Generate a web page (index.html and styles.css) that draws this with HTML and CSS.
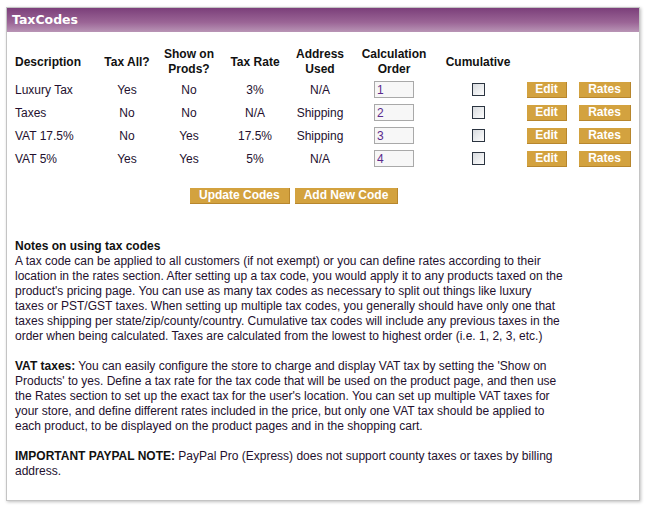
FILE: index.html
```html
<!DOCTYPE html>
<html lang="en">
<head>
  <meta charset="UTF-8" />
  <title>TaxCodes</title>
  <link rel="stylesheet" href="styles.css">
</head>
<body>

  <div class="panel">
    <div class="panel-head">TaxCodes</div>

    <div class="panel-body">
      <table class="codes">
        <thead>
          <tr>
            <th class="col-desc">Description</th>
            <th class="col-all">Tax All?</th>
            <th class="col-show">Show on<br>Prods?</th>
            <th class="col-rate">Tax Rate</th>
            <th class="col-addr">Address<br>Used</th>
            <th class="col-order">Calculation<br>Order</th>
            <th class="col-cum">Cumulative</th>
            <th class="col-edit"></th>
            <th class="col-rates"></th>
          </tr>
        </thead>
        <tbody>
          <tr>
            <td class="col-desc">Luxury Tax</td>
            <td>Yes</td>
            <td>No</td>
            <td>3%</td>
            <td>N/A</td>
            <td><input type="text" class="order" value="1"></td>
            <td><input type="checkbox" class="cum"></td>
            <td><button class="btn btn-edit">Edit</button></td>
            <td><button class="btn btn-rates">Rates</button></td>
          </tr>
          <tr>
            <td class="col-desc">Taxes</td>
            <td>No</td>
            <td>No</td>
            <td>N/A</td>
            <td>Shipping</td>
            <td><input type="text" class="order" value="2"></td>
            <td><input type="checkbox" class="cum"></td>
            <td><button class="btn btn-edit">Edit</button></td>
            <td><button class="btn btn-rates">Rates</button></td>
          </tr>
          <tr>
            <td class="col-desc">VAT 17.5%</td>
            <td>No</td>
            <td>Yes</td>
            <td>17.5%</td>
            <td>Shipping</td>
            <td><input type="text" class="order" value="3"></td>
            <td><input type="checkbox" class="cum"></td>
            <td><button class="btn btn-edit">Edit</button></td>
            <td><button class="btn btn-rates">Rates</button></td>
          </tr>
          <tr>
            <td class="col-desc">VAT 5%</td>
            <td>Yes</td>
            <td>Yes</td>
            <td>5%</td>
            <td>N/A</td>
            <td><input type="text" class="order" value="4"></td>
            <td><input type="checkbox" class="cum"></td>
            <td><button class="btn btn-edit">Edit</button></td>
            <td><button class="btn btn-rates">Rates</button></td>
          </tr>
        </tbody>
      </table>

      <div class="actions">
        <button class="btn btn-wide">Update Codes</button>
        <button class="btn btn-wide">Add New Code</button>
      </div>

      <div class="notes">
        <p>
          <strong>Notes on using tax codes</strong><br>
          A tax code can be applied to all customers (if not exempt) or you can define rates according to their<br>
          location in the rates section. After setting up a tax code, you would apply it to any products taxed on the<br>
          product's pricing page. You can use as many tax codes as necessary to split out things like luxury<br>
          taxes or PST/GST taxes. When setting up multiple tax codes, you generally should have only one that<br>
          taxes shipping per state/zip/county/country. Cumulative tax codes will include any previous taxes in the<br>
          order when being calculated. Taxes are calculated from the lowest to highest order (i.e. 1, 2, 3, etc.)
        </p>
        <p>
          <strong>VAT taxes:</strong> You can easily configure the store to charge and display VAT tax by setting the 'Show on<br>
          Products' to yes. Define a tax rate for the tax code that will be used on the product page, and then use<br>
          the Rates section to set up the exact tax for the user's location. You can set up multiple VAT taxes for<br>
          your store, and define different rates included in the price, but only one VAT tax should be applied to<br>
          each product, to be displayed on the product pages and in the shopping cart.
        </p>
        <p>
          <strong>IMPORTANT PAYPAL NOTE:</strong> PayPal Pro (Express) does not support county taxes or taxes by billing<br>
          address.
        </p>
      </div>
    </div>
  </div>

</body>
</html>
```

FILE: styles.css
```css
* {
  box-sizing: border-box;
}

body {
  margin: 0;
  padding: 7px 6px;
  background: #fff;
  font-family: 'Liberation Sans', Arial, sans-serif;
  font-size: 12px;
  color: #24102e;
}

.panel {
  width: 634px;
  height: 494px;
  border: 1px solid #c4c4c4;
  box-shadow: 1px 1px 3px rgba(0, 0, 0, 0.25);
  background: #fff;
}

.panel-head {
  height: 24px;
  padding: 4px 5px 0;
  background: linear-gradient(to bottom, #7b3f7a, #9b6596 60%, #b995b6);
  color: #fff;
  font-family: 'DejaVu Sans', Verdana, sans-serif;
  font-weight: bold;
  font-size: 12.5px;
  line-height: 16px;
}

.panel-body {
  padding: 14px 0 0 8px;
}

.codes {
  width: 623px;
  table-layout: fixed;
  border-collapse: collapse;
}

.codes th,
.codes td {
  padding: 0;
  text-align: center;
}

.codes th {
  height: 32px;
  line-height: 15px;
  font-weight: bold;
  color: #111;
  vertical-align: middle;
}

.codes td {
  height: 23px;
  vertical-align: middle;
}

.codes .col-desc { width: 85px; text-align: left; }
.codes .col-all { width: 54px; }
.codes .col-show { width: 70px; }
.codes .col-rate { width: 62px; }
.codes .col-addr { width: 68px; }
.codes .col-order { width: 80px; }
.codes .col-cum { width: 88px; }
.codes .col-edit { width: 50px; }
.codes .col-rates { width: 66px; }

.order {
  display: block;
  width: 40px;
  height: 17px;
  margin: 0 0 0 20px;
  padding: 0 2px;
  border: 1px solid #a9a9a9;
  background: #f7f7f7;
  font-family: 'Liberation Sans', Arial, sans-serif;
  font-size: 12px;
  color: #5b2a8c;
}

.cum {
  -webkit-appearance: none;
  appearance: none;
  display: block;
  width: 13px;
  height: 13px;
  margin: 0 auto;
  border: 1px solid #2b3440;
  background: linear-gradient(135deg, #d8dbdf, #fdfdfd);
}

.btn {
  height: 16px;
  padding: 0 6px;
  border: none;
  border-right: 1px solid #b7862d;
  border-bottom: 1px solid #b7862d;
  background: #d3a23f;
  color: #fff;
  font-family: 'Liberation Sans', Arial, sans-serif;
  font-weight: bold;
  font-size: 12px;
  line-height: 15px;
  cursor: pointer;
}

.btn-edit { width: 40px; }
.btn-rates { width: 52px; }

.actions {
  display: flex;
  gap: 5px;
  margin: 18px 0 0 175px;
}

.btn-wide {
  padding: 0 9px;
}

.notes {
  width: 610px;
  margin-top: 35px;
  line-height: 15px;
  white-space: nowrap;
}

.notes p {
  margin: 0 0 15px;
}

.notes strong {
  color: #111;
}
```
